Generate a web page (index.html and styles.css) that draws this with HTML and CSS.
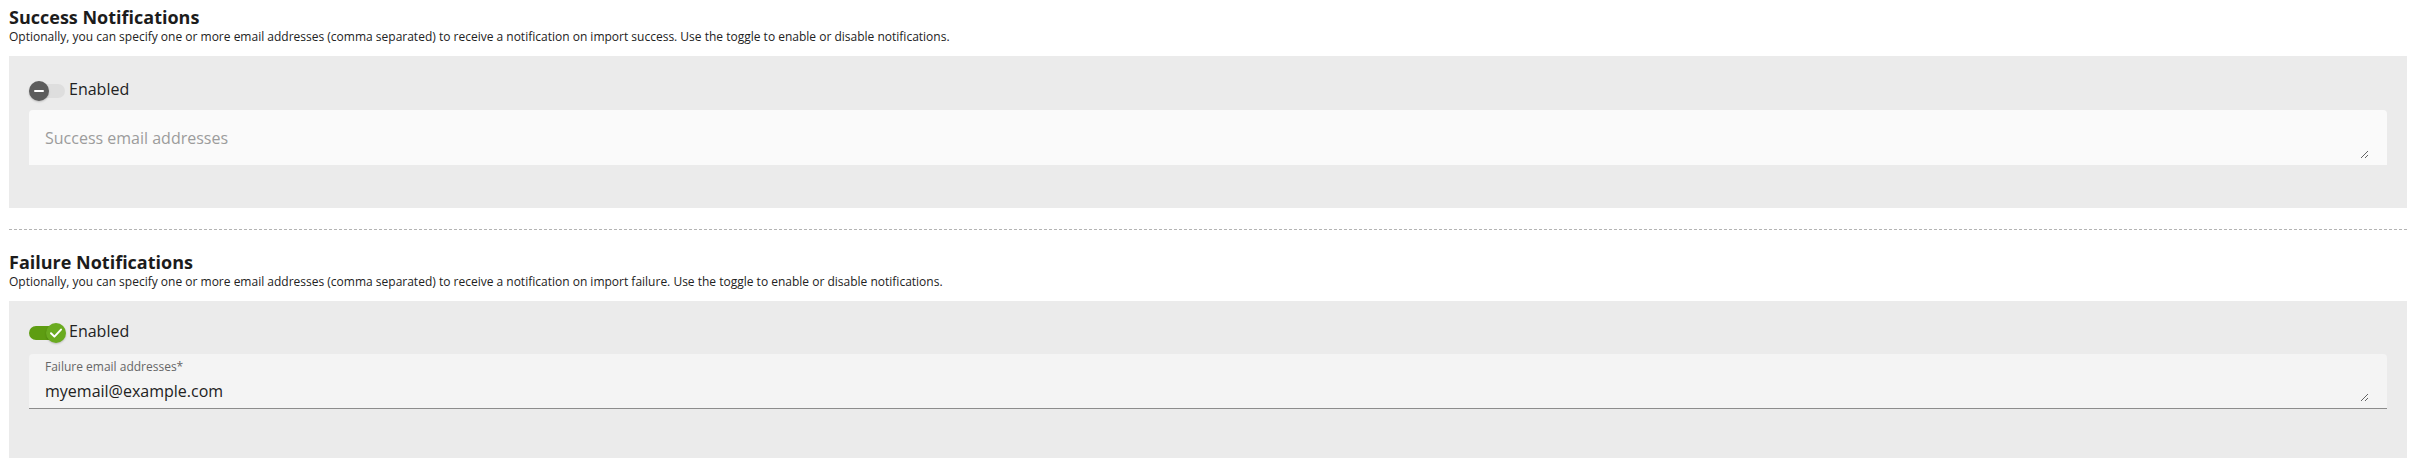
FILE: index.html
```html
<!DOCTYPE html>
<html lang="en">
<head>
	<meta charset="UTF-8">
	<title>Import notifications</title>
	<link rel="stylesheet" href="styles.css">
</head>
<body>
	<div class="page">
		<section class="notify">
			<h2 class="notify-title">Success Notifications</h2>
			<p class="notify-desc">Optionally, you can specify one or more email addresses (comma separated) to receive a notification on import success. Use the toggle to enable or disable notifications.</p>
			<div class="notify-box">
				<label class="switch">
					<span class="switch-track">
						<span class="switch-knob"><span class="switch-minus"></span></span>
					</span>
					<span class="switch-label">Enabled</span>
				</label>
				<div class="field">
					<textarea rows="1" placeholder="Success email addresses"></textarea>
				</div>
			</div>
		</section>

		<hr class="divider">

		<section class="notify">
			<h2 class="notify-title">Failure Notifications</h2>
			<p class="notify-desc">Optionally, you can specify one or more email addresses (comma separated) to receive a notification on import failure. Use the toggle to enable or disable notifications.</p>
			<div class="notify-box notify-box-last">
				<label class="switch switch-on">
					<span class="switch-track">
						<span class="switch-knob">
							<svg width="20" height="20" viewBox="0 0 20 20"><path d="M5 10.2 L8.4 13.6 L15 6.6" fill="none" stroke="#fff" stroke-width="2" stroke-linecap="round" stroke-linejoin="round"/></svg>
						</span>
					</span>
					<span class="switch-label">Enabled</span>
				</label>
				<div class="field field-filled">
					<span class="field-label">Failure email addresses*</span>
					<textarea rows="1">myemail@example.com</textarea>
				</div>
			</div>
		</section>
	</div>
</body>
</html>
```

FILE: styles.css
```css
* {box-sizing: border-box;}
body {margin: 0;background: #fff;color: #222;font-family: "Open Sans", "Liberation Sans", sans-serif;}
.page {padding: 6px 6px 0 9px;}

.notify-title {margin: 0;font-size: 18px;line-height: 22px;font-weight: 700;color: #1c1c1c;}
.notify-desc {margin: 0;font-size: 12px;line-height: 18px;color: #222;}
.notify-box {margin-top: 10px;padding: 25px 20px 43px 20px;background: #ebebeb;}
.notify-box-last {padding-top: 22px;padding-bottom: 60px;}

.switch {display: flex;align-items: center;gap: 4px;height: 20px;cursor: pointer;}
.switch-track {position: relative;width: 36px;height: 14px;border-radius: 7px;background: #dedede;}
.switch-knob {position: absolute;top: -3px;left: 0;width: 20px;height: 20px;border-radius: 50%;background: #5c5c5c;display: flex;align-items: center;justify-content: center;box-shadow: 0 1px 2px rgba(0,0,0,.2);}
.switch-minus {width: 10px;height: 2px;border-radius: 1px;background: #fff;}
.switch-on .switch-track {background: #5e9d12;}
.switch-on .switch-knob {left: 17px;background: #6aab20;}
.switch-knob svg {display: block;}
.switch-label {align-self: flex-start;font-size: 16px;line-height: 16px;color: #222;}

.field {display: flex;flex-direction: column;height: 55px;margin-top: 9px;padding: 16px 18px 6px 16px;background: #fafafa;border-radius: 4px 4px 0 0;}
.switch-on + .field {margin-top: 11px;}
.field-filled {padding-top: 5px;background: #f4f4f4;border-bottom: 1px solid #8c8c8c;}
.field-label {font-size: 12px;line-height: 16px;color: #666;margin-bottom: 4px;}
.field textarea {flex: 1;min-height: 0;width: 100%;margin: 0;padding: 0;border: 0;outline: none;background: transparent;font-family: inherit;font-size: 16px;line-height: 24px;color: #222;resize: vertical;}
.field textarea::placeholder {color: #9c9c9c;}

.divider {height: 0;margin: 21px 0 21px 0;border: 0;border-top: 1px dashed #b4b4b4;}
```
